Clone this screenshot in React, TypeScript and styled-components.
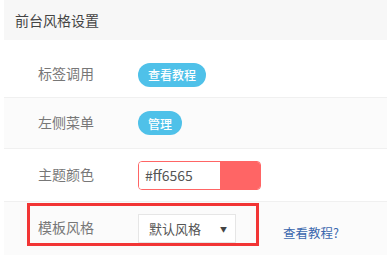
import React from "react";
import styled, { createGlobalStyle } from "styled-components";

const Global = createGlobalStyle`
  html, body { margin: 0; padding: 0; background: #fff; }
  body { font-family: "Noto Sans CJK SC", "Noto Sans", "Liberation Sans", sans-serif; }
`;

const Panel = styled.div`
  padding-left: 4px;
  width: 383px;
`;

const Header = styled.div`
  height: 40px;
  line-height: 40px;
  background: #f7f7f7;
  padding-left: 11px;
  font-size: 14px;
  color: #444;
`;

const Row = styled.div<{ $striped?: boolean; $h: number; $first?: boolean }>`
  position: relative;
  display: flex;
  align-items: center;
  box-sizing: border-box;
  height: ${(p) => p.$h}px;
  padding-left: 34px;
  padding-top: ${(p) => (p.$first ? 12 : 0)}px;
  background: ${(p) => (p.$striped ? "#fbfbfb" : "#fff")};
  border-top: ${(p) => (p.$first ? "none" : "1px solid #f0f0f0")};
`;

const Label = styled.div`
  width: 100px;
  font-size: 14px;
  color: #777;
  margin-top: -3px;
`;

const Pill = styled.span`
  display: inline-flex;
  align-items: center;
  height: 24px;
  padding: 0 10px;
  border-radius: 12px;
  background: #4fc1e9;
  color: #fff;
  font-size: 12px;
  font-weight: 500;
`;

const ColorInput = styled.div`
  display: flex;
  width: 123px;
  height: 29px;
  box-sizing: border-box;
  border: 1px solid #ff6565;
  border-radius: 4px;
  overflow: hidden;
`;

const ColorText = styled.div`
  flex: 1;
  display: flex;
  align-items: center;
  padding-left: 6px;
  font-size: 14px;
  color: #555;
  background: #fff;
`;

const Swatch = styled.div<{ $c: string }>`
  width: 40px;
  background: ${(p) => p.$c};
`;

const Select = styled.div`
  display: flex;
  align-items: center;
  justify-content: space-between;
  width: 98px;
  height: 29px;
  box-sizing: border-box;
  border: 1px solid #e6e6e6;
  background: #fff;
  padding: 0 8px 0 10px;
  font-size: 13px;
  color: #555;
`;

const Caret = styled.span`
  font-size: 7px;
  color: #444;
`;

const HelpLink = styled.a`
  margin-left: 47px;
  margin-top: 8px;
  font-size: 12.5px;
  color: #3b68ae;
  text-decoration: none;
`;

const Highlight = styled.div`
  position: absolute;
  left: 23px;
  top: 1px;
  width: 232px;
  height: 43px;
  box-sizing: border-box;
  border: 3px solid #f23535;
  pointer-events: none;
`;

export default function App() {
  const color = "#ff6565";
  return (
    <>
      <Global />
      <Panel>
        <Header>前台风格设置</Header>
        <Row $first $h={57}>
          <Label>标签调用</Label>
          <Pill>查看教程</Pill>
        </Row>
        <Row $striped $h={51}>
          <Label>左侧菜单</Label>
          <Pill>管理</Pill>
        </Row>
        <Row $h={53}>
          <Label>主题颜色</Label>
          <ColorInput>
            <ColorText>{color}</ColorText>
            <Swatch $c={color} />
          </ColorInput>
        </Row>
        <Row $striped $h={54}>
          <Label>模板风格</Label>
          <Select>
            <span>默认风格</span>
            <Caret>▼</Caret>
          </Select>
          <HelpLink href="#">查看教程?</HelpLink>
          <Highlight />
        </Row>
      </Panel>
    </>
  );
}
